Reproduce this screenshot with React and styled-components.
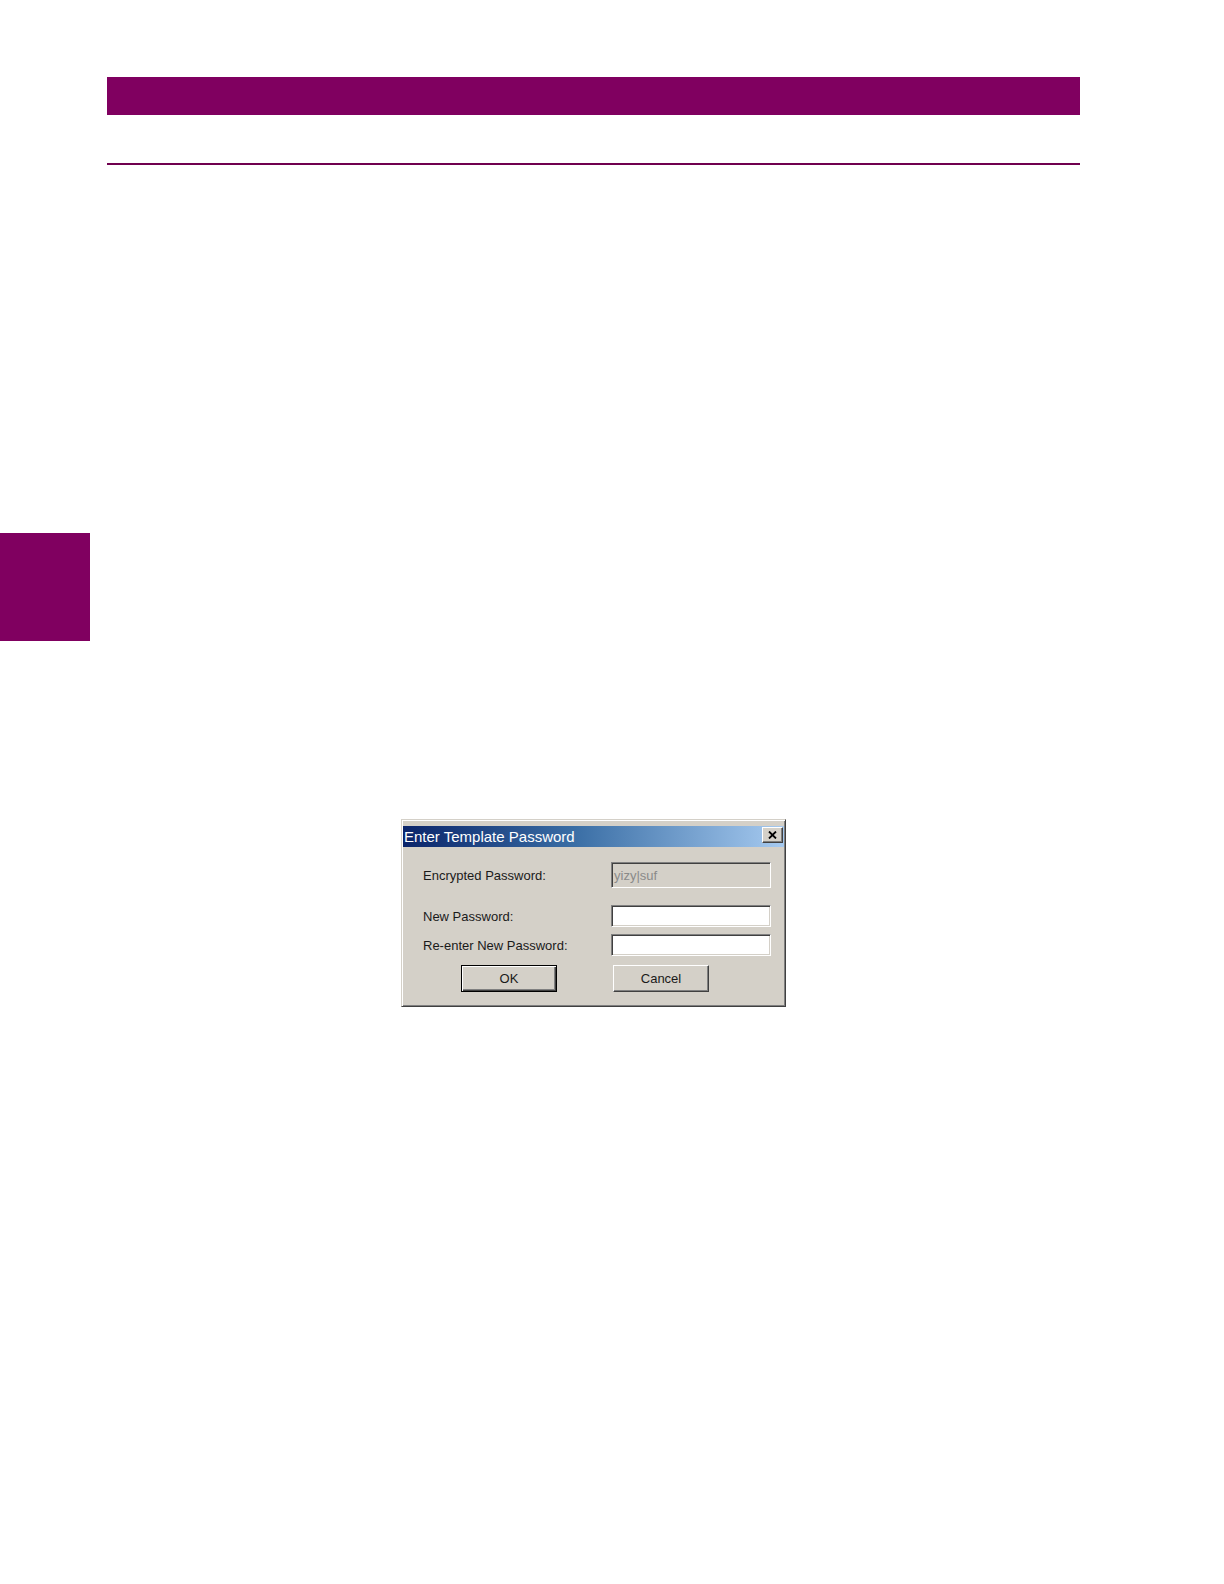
import React from 'react';
import styled, { createGlobalStyle } from 'styled-components';

const GlobalStyle = createGlobalStyle`
  html, body {
    margin: 0;
    padding: 0;
    background: #ffffff;
  }
  body {
    font-family: 'Liberation Sans', Arial, sans-serif;
  }
`;

const Page = styled.div`
  width: 1224px;
  min-height: 1584px;
  padding-top: 77px;
  box-sizing: border-box;
  background: #ffffff;
`;

const HeaderBar = styled.div`
  margin-left: 107px;
  width: 973px;
  height: 38px;
  background: #800060;
`;

const Rule = styled.div`
  margin: 48px 0 0 107px;
  width: 973px;
  height: 2px;
  background: #70004f;
`;

const SideTab = styled.div`
  margin-top: 368px;
  width: 90px;
  height: 108px;
  background: #800060;
`;

const Dialog = styled.div`
  margin: 178px 0 0 401px;
  width: 385px;
  box-sizing: border-box;
  background: #d4d0c8;
  border: 1px solid;
  border-color: #d4d0c8 #404040 #404040 #d4d0c8;
  box-shadow: inset 1px 1px #ffffff, inset -1px -1px #808080;
  padding: 6px 1px 14px 1px;
`;

const TitleBar = styled.div`
  display: flex;
  align-items: flex-start;
  justify-content: space-between;
  height: 21px;
  padding-left: 1px;
  background: linear-gradient(to right, #0a246a 0%, #3a6ea5 45%, #a6caf0 100%);
`;

const TitleText = styled.span`
  color: #ffffff;
  font-weight: normal;
  font-size: 15px;
  line-height: 21px;
`;

const CloseButton = styled.div`
  display: flex;
  align-items: center;
  justify-content: center;
  width: 21px;
  height: 16px;
  margin: 1px 1px 0 0;
  box-sizing: border-box;
  background: #d4d0c8;
  border: 1px solid;
  border-color: #ffffff #404040 #404040 #ffffff;
  box-shadow: inset -1px -1px #808080;
`;

const Body = styled.div`
  padding: 15px 0 0 20px;
`;

const Row = styled.div`
  display: grid;
  grid-template-columns: 188px 160px;
  align-items: center;
  height: ${p => p.$height}px;
  margin-top: ${p => p.$top}px;
`;

const Label = styled.span`
  font-size: 13px;
  color: #1a1a1a;
  white-space: nowrap;
`;

const Field = styled.div`
  height: 100%;
  box-sizing: border-box;
  display: flex;
  align-items: center;
  padding-left: 2px;
  background: ${p => (p.$disabled ? '#d4d0c8' : '#ffffff')};
  color: #8a8a8a;
  font-size: 13px;
  border: 1px solid;
  border-color: #808080 #ffffff #ffffff #808080;
  box-shadow: inset 1px 1px #404040, inset -1px -1px #d4d0c8;
`;

const Button = styled.div`
  height: 27px;
  width: 96px;
  box-sizing: border-box;
  display: flex;
  align-items: center;
  justify-content: center;
  margin-left: ${p => p.$left}px;
  font-size: 13px;
  color: #1a1a1a;
  background: #d4d0c8;
  border: 1px solid;
  border-color: ${p => (p.$default ? '#000000' : '#ffffff #404040 #404040 #ffffff')};
  box-shadow: ${p =>
    p.$default
      ? 'inset 1px 1px #ffffff, inset -1px -1px #404040, inset -2px -2px #808080'
      : 'inset -1px -1px #808080'};
`;

const CloseIcon = () => (
  <svg width="9" height="8" viewBox="0 0 9 8">
    <path d="M1 0.5 L8 7.5 M8 0.5 L1 7.5" stroke="#000" strokeWidth="1.8" />
  </svg>
);

export default function App() {
  return (
    <>
      <GlobalStyle />
      <Page>
        <HeaderBar />
        <Rule />
        <SideTab />
        <Dialog>
          <TitleBar>
            <TitleText>Enter Template Password</TitleText>
            <CloseButton>
              <CloseIcon />
            </CloseButton>
          </TitleBar>
          <Body>
            <Row $height={26} $top={0}>
              <Label>Encrypted Password:</Label>
              <Field $disabled>yizy|suf</Field>
            </Row>
            <Row $height={22} $top={17}>
              <Label>New Password:</Label>
              <Field />
            </Row>
            <Row $height={22} $top={7}>
              <Label>Re-enter New Password:</Label>
              <Field />
            </Row>
            <Row $height={27} $top={9}>
              <Button $default $left={38}>OK</Button>
              <Button $left={2}>Cancel</Button>
            </Row>
          </Body>
        </Dialog>
      </Page>
    </>
  );
}
